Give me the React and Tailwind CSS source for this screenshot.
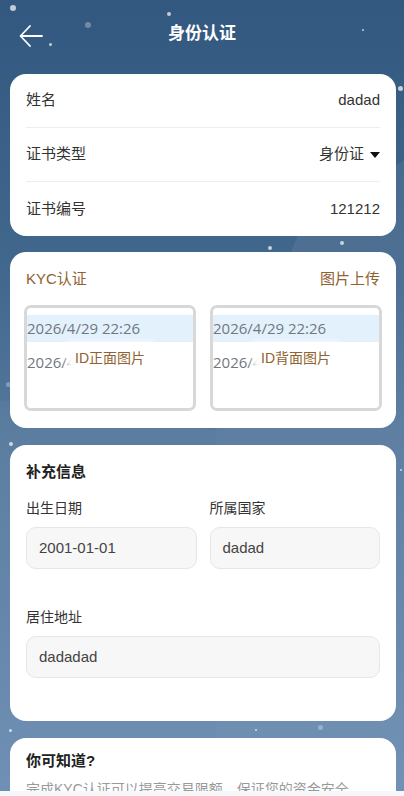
const rows = [
  { label: '姓名', value: 'dadad' },
  { label: '证书类型', value: '身份证', select: true },
  { label: '证书编号', value: '121212' },
]

const dots = [
  { x: 10, y: 5, s: 6 },
  { x: 167, y: 12, s: 4 },
  { x: 85, y: 22, s: 6, dim: true },
  { x: 49, y: 43, s: 3 },
  { x: 362, y: 29, s: 2 },
  { x: 398, y: 86, s: 5 },
  { x: 268, y: 246, s: 4 },
  { x: 340, y: 241, s: 4 },
  { x: 26, y: 253, s: 3 },
  { x: 6, y: 382, s: 5, dim: true },
  { x: 9, y: 442, s: 4 },
  { x: 87, y: 457, s: 2 },
  { x: 400, y: 469, s: 2 },
  { x: 9, y: 729, s: 3 },
  { x: 255, y: 729, s: 2 },
  { x: 318, y: 725, s: 5, dim: true },
]

function Arrow() {
  return (
    <svg width="24" height="22" viewBox="0 0 24 22" fill="none" stroke="white" strokeWidth="1.8" strokeLinecap="round" strokeLinejoin="round">
      <path d="M23 11H2" />
      <path d="M11 1L1.5 11L11 21" />
    </svg>
  )
}

function IdImage({ label }) {
  return (
    <div className="relative h-[106px] flex-1 rounded-[7px] border-[3px] border-[#d8d8d8] overflow-hidden bg-white font-['Open_Sans','Liberation_Sans',sans-serif]">
      <div className="mt-[7px] h-[27px] bg-[#e3f1fd] flex items-center text-[15px] text-[#72777f] leading-none">
        2026/4/29 22:26
      </div>
      <div className="h-[40px] flex items-center text-[15px] text-[#72777f] leading-none">2026/4/29 22:26</div>
      <div className="absolute left-1/2 top-[40px] -translate-x-1/2 bg-white px-[2px] shadow-[0_0_6px_6px_#ffffff] text-[14px] text-[#8f6230] whitespace-nowrap leading-[20px] font-['Liberation_Sans','Noto_Sans_CJK_SC',sans-serif]">
        {label}
      </div>
    </div>
  )
}

function Field({ label, value }) {
  return (
    <div className="flex flex-col">
      <span className="text-[14px] text-[#333] leading-[20px]">{label}</span>
      <div className="mt-[9px] h-[42px] rounded-[10px] border border-[#e6e6e6] bg-[#f7f7f7] flex items-center px-[12px] text-[15px] text-[#444]">
        {value}
      </div>
    </div>
  )
}

export default function App() {
  return (
    <div className="h-[796px] w-[404px] flex flex-col overflow-hidden font-['Liberation_Sans','Noto_Sans_CJK_SC',sans-serif]">
      <div className="relative flex-1 overflow-hidden bg-[linear-gradient(180deg,#32587f_0%,#43688e_35%,#54789d_55%,#6a8cb1_100%)]">
        {/* background decoration */}
        <svg className="absolute inset-0" width="404" height="791" viewBox="0 0 404 791">
          <polygon points="300,230 404,160 404,791 216,791 216,430" fill="#ffffff" opacity="0.06" />
          <polygon points="0,400 216,430 216,791 0,791" fill="#ffffff" opacity="0.04" />
        </svg>
        {dots.map((d, i) => (
          <span
            key={i}
            className={`absolute rounded-full bg-white ${d.dim ? 'opacity-30' : 'opacity-70'}`}
            style={{ left: d.x, top: d.y, width: d.s, height: d.s }}
          />
        ))}

        <div className="relative flex flex-col">
          {/* header */}
          <div className="h-[70px] flex items-center justify-center relative">
            <button className="absolute left-[19px] top-[25px]">
              <Arrow />
            </button>
            <h1 className="text-[17px] font-bold text-white -mt-[2px]">身份认证</h1>
          </div>

          {/* basic info */}
          <div className="ml-[10px] w-[386px] mt-[4px] rounded-[16px] bg-white px-[16px]">
            {rows.map((r, i) => (
              <div
                key={r.label}
                className={`h-[54px] flex items-center justify-between text-[15px] ${i < rows.length - 1 ? 'border-b border-[#eeeeee]' : ''} ${i === 0 ? 'h-[53px]' : ''}`}
              >
                <span className="text-[#333]">{r.label}</span>
                <span className="flex items-center gap-[6px] text-[#333]">
                  {r.value}
                  {r.select && (
                    <svg width="10" height="6" viewBox="0 0 10 6">
                      <path d="M0 0H10L5 6Z" fill="#111" />
                    </svg>
                  )}
                </span>
              </div>
            ))}
          </div>

          {/* KYC */}
          <div className="ml-[10px] w-[386px] mt-[16px] rounded-[16px] bg-white px-[14px] pt-[17px] pb-[17px]">
            <div className="flex justify-between px-[2px] text-[15px] text-[#8f6230] leading-[20px]">
              <span>KYC认证</span>
              <span>图片上传</span>
            </div>
            <div className="mt-[16px] flex gap-[14px]">
              <IdImage label="ID正面图片" />
              <IdImage label="ID背面图片" />
            </div>
          </div>

          {/* extra info */}
          <div className="ml-[10px] w-[386px] mt-[17px] rounded-[16px] bg-white px-[16px] pt-[17px] pb-[43px]">
            <h2 className="text-[15px] font-bold text-[#222] leading-[20px]">补充信息</h2>
            <div className="mt-[16px] grid grid-cols-2 gap-[13px]">
              <Field label="出生日期" value="2001-01-01" />
              <Field label="所属国家" value="dadad" />
            </div>
            <div className="mt-[38px]">
              <Field label="居住地址" value="dadadad" />
            </div>
          </div>

          {/* tip */}
          <div className="ml-[10px] w-[386px] mt-[17px] rounded-[16px] bg-white px-[16px] pt-[13px] pb-[16px]">
            <h2 className="text-[15px] font-bold text-[#222] leading-[20px]">你可知道?</h2>
            <p className="mt-[8px] text-[14px] text-[#999] leading-[20px] whitespace-nowrap">完成KYC认证可以提高交易限额，保证您的资金安全。</p>
          </div>
        </div>
      </div>
      <div className="h-[5px] bg-[#f5f7fb]" />
    </div>
  )
}
